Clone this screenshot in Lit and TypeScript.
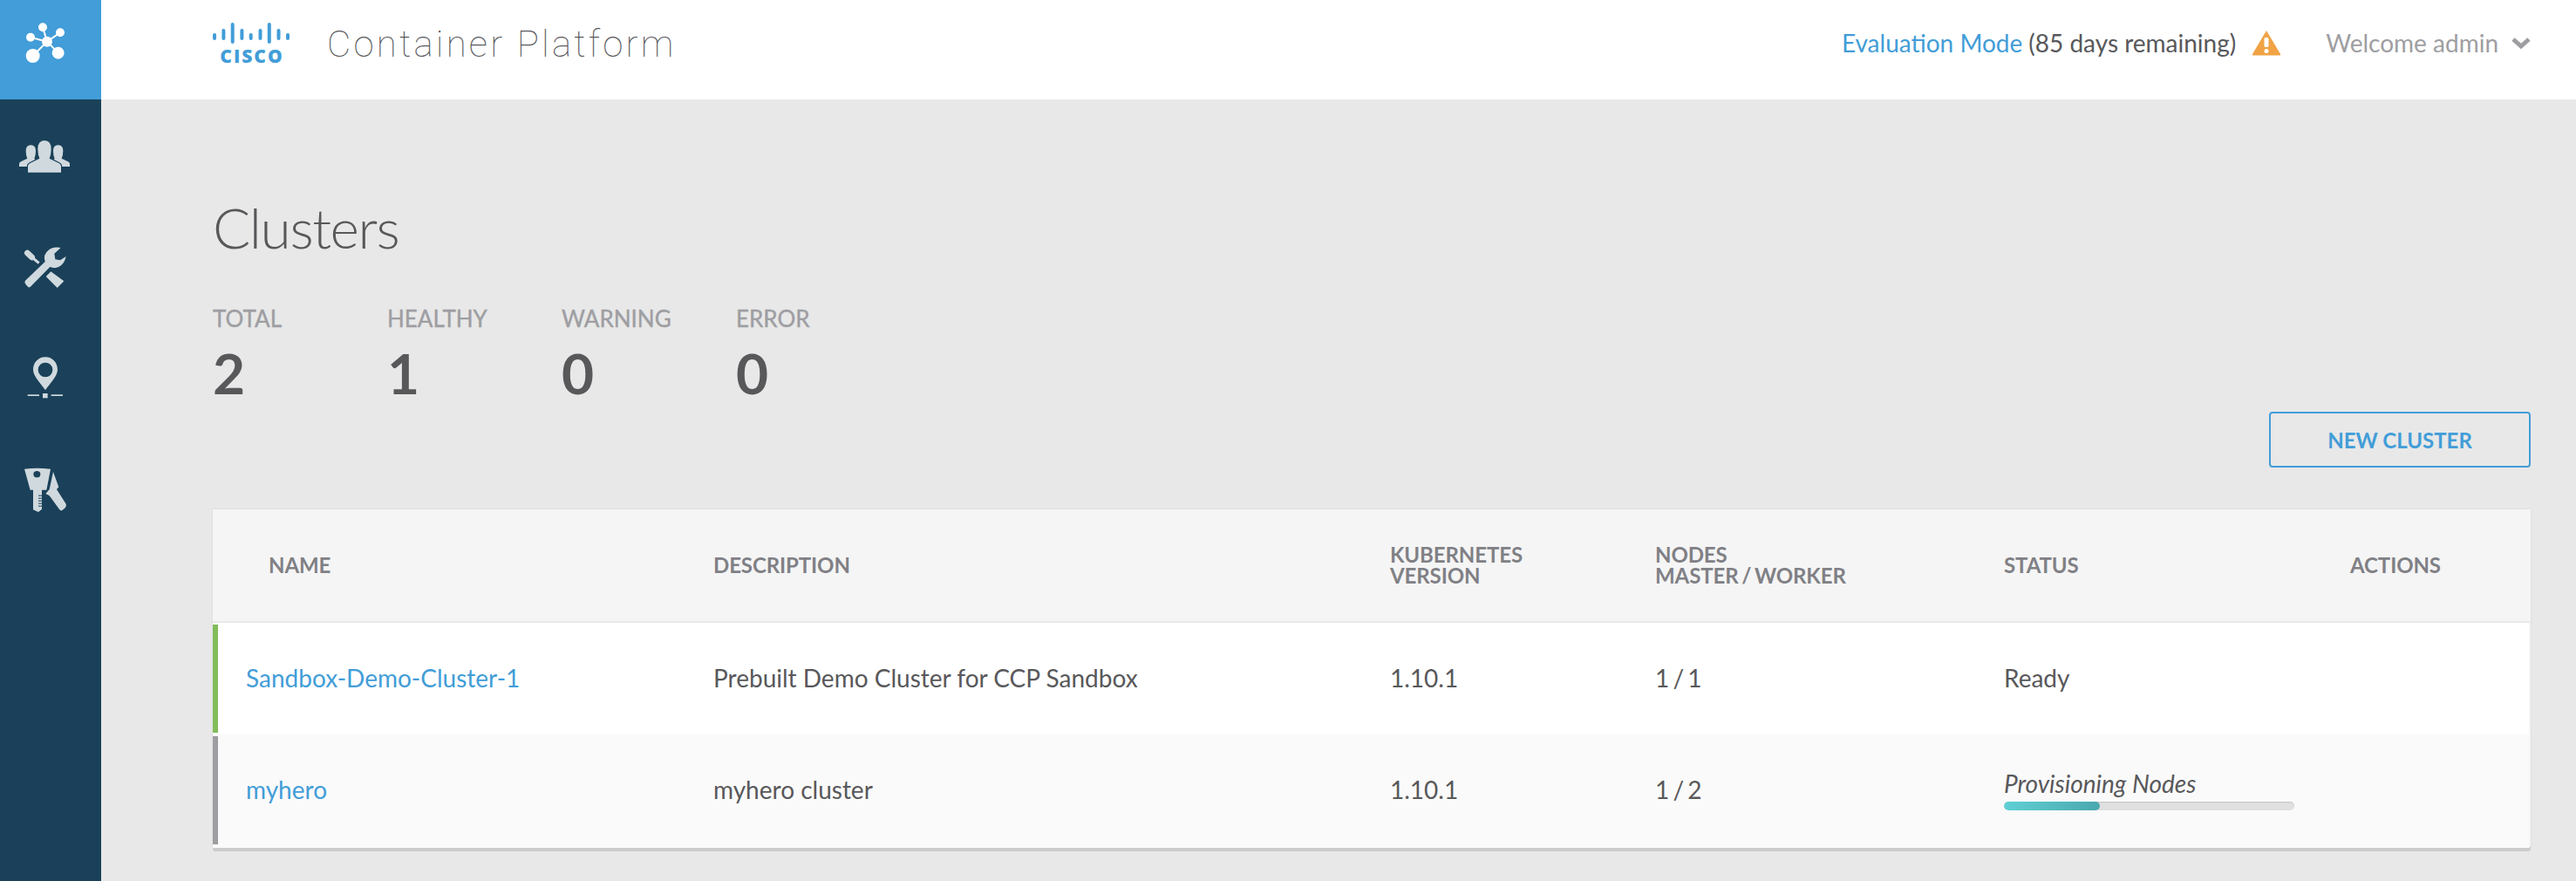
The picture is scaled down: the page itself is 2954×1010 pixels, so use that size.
import { LitElement, html, css, svg } from "lit";
import { customElement } from "lit/decorators.js";

const navIcons = [
  svg`<g fill="#fff" stroke="#fff" stroke-width="6"><path d="M120 101L105 52M120 101L165 70M120 101L63 86M120 101L71 150M120 101L158 140"/></g>
  <g fill="#fff"><circle cx="120" cy="101" r="18"/><circle cx="105" cy="52" r="15"/><circle cx="165" cy="70" r="15"/><circle cx="63" cy="86" r="15"/><circle cx="71" cy="150" r="24"/><circle cx="158" cy="140" r="21"/></g>`,
  svg`<g fill="#d0d9de"><path d="M24 138V128Q24 124 30 121L52 110Q47 100 47 84Q47 64 64 64Q81 64 81 84Q81 100 76 110L84 118V138Z"/>
  <path d="M198 138V128Q198 124 192 121L170 110Q175 100 175 84Q175 64 158 64Q141 64 141 84Q141 100 146 110L138 118V138Z"/>
  <path stroke="#1a4159" stroke-width="7" paint-order="stroke" d="M54 158V136Q54 130 62 126L94 110Q88 98 88 78Q88 48 111 48Q134 48 134 78Q134 98 128 110L160 126Q168 130 168 136V158Z"/></g>`,
  svg`<g fill="#d0d9de"><path d="M45 155L113 90Q105 65 125 50Q143 36 167 42L145 62L148 82L165 85L185 72Q180 98 160 108Q145 115 130 108L62 177Q57 180 52 175L45 166Q41 160 45 155Z"/>
  <path d="M116 141L133 124L178 157L155 180Z"/>
  <path d="M52 60L68 75" stroke="#d0d9de" stroke-width="20" stroke-linecap="round"/><path d="M68 75L92 95" stroke="#d0d9de" stroke-width="9"/></g>`,
  svg`<g fill="#d0d9de"><path fill-rule="evenodd" d="M114 43C90 43 72 62 72 86C72 110 100 135 114 157C128 135 156 110 156 86C156 62 138 43 114 43ZM114 62A25 25 0 1 0 114.1 112A25 25 0 1 0 114 62Z"/>
  <rect x="53" y="172" width="40" height="5"/><rect x="105" y="168" width="17" height="16"/><rect x="134" y="172" width="40" height="5"/></g>`,
  svg`<g fill="#d0d9de"><path fill-rule="evenodd" d="M42 38Q85 32 132 38L118 110H102V176L90 186L72 178V110H62ZM85 45A12 11 0 1 0 85.1 67A12 11 0 1 0 85 45Z"/>
  <path d="M141 48L160 100L153 108L185 158Q188 165 182 172L172 180Q168 183 163 178L128 130L115 123L128 108Z"/></g>
  <g fill="#1a4159"><rect x="90" y="128" width="12" height="3"/><rect x="90" y="137" width="12" height="3"/><rect x="90" y="146" width="12" height="3"/><rect x="90" y="155" width="12" height="3"/><rect x="90" y="164" width="12" height="3"/></g>`,
];

const bars: [number, number, number][] = [
  [2, 38, 46], [12.4, 33, 46], [22.7, 26, 50], [33.4, 33, 46], [43.7, 38, 46],
  [54.5, 33, 46], [64.8, 26, 50], [75.5, 33, 46], [86, 38, 46],
];

@customElement("app-root")
export class AppRoot extends LitElement {
  static styles = css`
    :host {
      display: flex;
      width: 100%;
      min-height: 1010px;
      background: #e8e8e8;
      font-family: "Lato", sans-serif;
      color: #58585b;
      overflow: hidden;
    }
    .side {
      width: 116px;
      flex: none;
      background: #1a4159;
      display: flex;
      flex-direction: column;
    }
    .nav {
      display: block;
      padding-left: 14px;
      height: 76px;
    }
    .nav svg { display: block; width: 76px; height: 76px; }
    .nav.active { background: #429dd8; padding-top: 14px; padding-bottom: 24px; }
    .nav.n1 { margin-top: 31px; }
    .nav.n2, .nav.n3 { margin-top: 49px; }
    .nav.n4 { margin-top: 54px; }
    .content { flex: 1; min-width: 0; display: flex; flex-direction: column; }
    header {
      height: 114px;
      background: #fff;
      display: flex;
      align-items: center;
      padding: 0 52px 0 128px;
    }
    .logo { width: 90px; display: flex; flex-direction: column; align-items: center; height: 114px; }
    .logo svg { display: block; width: 90px; height: 54px; }
    .cisco {
      font-family: "Open Sans", sans-serif;
      font-weight: 800;
      font-size: 21px;
      line-height: 20px;
      letter-spacing: 2px;
      color: #429dd8;
    }
    .title {
      font-family: "Roboto", sans-serif;
      font-weight: 100;
      font-size: 42px;
      letter-spacing: 3.2px;
      color: #58585b;
      margin-left: 41px;
      position: relative;
      top: -7px;
    }
    .right { margin-left: auto; display: flex; align-items: center; font-size: 28px; position: relative; top: -8px; }
    .link { color: #429dd8; }
    .remain { margin-left: 7px; }
    .warn { width: 34px; height: 30px; margin-left: 18px; display: block; }
    .welcome { color: #9e9ea2; margin-left: 51px; }
    .chev { width: 22px; height: 14px; margin-left: 15px; display: block; }
    main { padding: 0 52px 0 128px; display: flex; flex-direction: column; }
    h1 {
      margin: 115px 0 0;
      font-weight: 300;
      font-size: 64px;
      line-height: 64px;
      letter-spacing: -1.4px;
    }
    .stats { display: flex; margin-top: 57px; }
    .stat { width: 200px; }
    .stat-label { font-size: 26px; line-height: 30px; color: #9e9ea2; -webkit-text-stroke: 0.4px #9e9ea2; }
    .stat-value { font-size: 64px; line-height: 64px; font-weight: 700; margin-top: 16px; }
    .actions { display: flex; justify-content: flex-end; margin-top: 12px; }
    .btn {
      box-sizing: border-box;
      width: 300px;
      height: 64px;
      border: 2px solid #429dd8;
      border-radius: 4px;
      background: transparent;
      color: #429dd8;
      font: 700 24px "Lato", sans-serif;
    }
    .table {
      margin-top: 48px;
      box-shadow: 0 4px 0 #cccccc, 0 0 3px rgba(0,0,0,.08);
      border-radius: 0 0 3px 3px;
      background: #f5f5f5;
    }
    .grid { display: grid; grid-template-columns: 574px 776px 304px 400px 397px 207px; }
    .thead {
      height: 128px;
      background: #f5f5f5;
      align-items: center;
      font-size: 24px;
      line-height: 24px;
      font-weight: 700;
      letter-spacing: -0.1px;
      word-spacing: -2px;
      color: #808085;
      border-bottom: 2px solid #e8e8e8;
    }
    .row { height: 124px; padding: 2px 0; margin-right: 2px; font-size: 28px; align-items: stretch; }
    .row.a { background: #fff; }
    .row.b { background: #fafafa; padding-bottom: 4px; }
    .cell { display: flex; flex-direction: column; justify-content: center; padding-bottom: 3px; }
    .nodes { word-spacing: -3px; }
    .name { border-left: 6px solid transparent; padding-left: 32px; }
    .name.ok { border-left-color: #82bc5a; }
    .name.idle { border-left-color: #9e9ea2; }
    .thead .name { border: none; padding-left: 64px; }
    .prov { font-style: italic; line-height: 30px; margin-top: 3px; }
    .track { width: 333px; height: 10px; border-radius: 5px; background: #e0e0e0; box-shadow: inset 0 1px 1px rgba(0,0,0,.12); margin-top: 6px; overflow: hidden; }
    .fill { height: 100%; background: linear-gradient(90deg, #60d0d4, #4aa8b0); border-radius: 5px; }
  `;

  render() {
    return html`
      <aside class="side">
        ${navIcons.map((ic, i) => html`<div class="nav ${i === 0 ? "active" : "n" + i}"><svg viewBox="0 0 228 228">${ic}</svg></div>`)}
      </aside>
      <div class="content">
        <header>
          <div class="logo">
            <svg viewBox="0 0 90 54">
              ${bars.map(([x, a, b]) => svg`<line x1=${x} x2=${x} y1=${a + 2} y2=${b - 2} stroke="#429dd8" stroke-width="4" stroke-linecap="round"/>`)}
            </svg>
            <div class="cisco">CISCO</div>
          </div>
          <div class="title">Container Platform</div>
          <div class="right">
            <span class="link">Evaluation Mode</span>
            <span class="remain">(85 days remaining)</span>
            <svg class="warn" viewBox="0 0 34 30">
              <path d="M17 1L33 28Q33.500 29.500 32 29.500H2Q.5 29.500 1 28Z" fill="#f0a345"/>
              <rect x="14.500" y="9" width="5" height="11" rx="1.500" fill="#fff"/><circle cx="17" cy="24.500" r="2.500" fill="#fff"/>
            </svg>
            <span class="welcome">Welcome admin</span>
            <svg class="chev" viewBox="0 0 22 14"><path d="M2 3L11 11L20 3" fill="none" stroke="#9e9ea2" stroke-width="5"/></svg>
          </div>
        </header>
        <main>
          <h1>Clusters</h1>
          <div class="stats">
            ${[["TOTAL", 2], ["HEALTHY", 1], ["WARNING", 0], ["ERROR", 0]].map(
              ([l, v]) => html`<div class="stat"><div class="stat-label">${l}</div><div class="stat-value">${v}</div></div>`
            )}
          </div>
          <div class="actions"><button class="btn">NEW CLUSTER</button></div>
          <div class="table">
            <div class="grid thead">
              <div class="name">NAME</div>
              <div>DESCRIPTION</div>
              <div>KUBERNETES<br />VERSION</div>
              <div>NODES<br />MASTER / WORKER</div>
              <div>STATUS</div>
              <div>ACTIONS</div>
            </div>
            <div class="grid row a">
              <div class="cell name ok"><span class="link">Sandbox-Demo-Cluster-1</span></div>
              <div class="cell">Prebuilt Demo Cluster for CCP Sandbox</div>
              <div class="cell">1.10.1</div>
              <div class="cell nodes">1 / 1</div>
              <div class="cell">Ready</div>
              <div class="cell"></div>
            </div>
            <div class="grid row b">
              <div class="cell name idle"><span class="link">myhero</span></div>
              <div class="cell">myhero cluster</div>
              <div class="cell">1.10.1</div>
              <div class="cell nodes">1 / 2</div>
              <div class="cell">
                <div class="prov">Provisioning Nodes</div>
                <div class="track"><div class="fill" style="width: 33%"></div></div>
              </div>
              <div class="cell"></div>
            </div>
          </div>
        </main>
      </div>
    `;
  }
}
